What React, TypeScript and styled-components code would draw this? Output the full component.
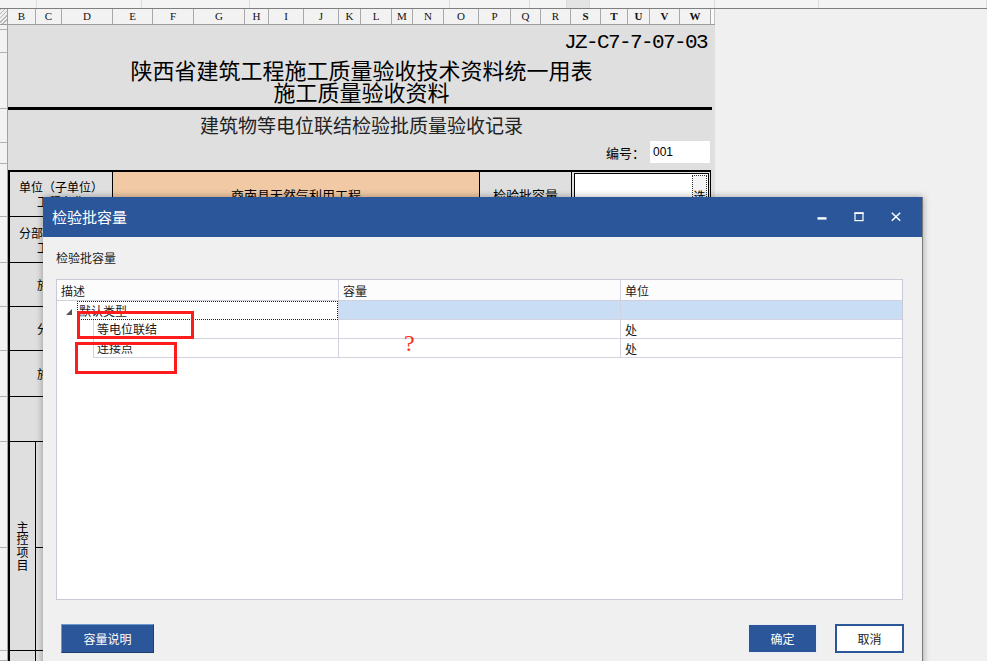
import React from "react";
import styled, { createGlobalStyle } from "styled-components";

const CJK = `"Noto Sans CJK SC", "Noto Sans", sans-serif`;

const GlobalStyle = createGlobalStyle`
  html, body { margin: 0; padding: 0; overflow: hidden; }
  body { font-family: ${CJK}; background: #f0f0f0; }
  * { box-sizing: border-box; }
`;

const Page = styled.div`
  position: relative;
  width: 987px;
  height: 661px;
  overflow: hidden;
  background: #f0f0f0;
  display: flex;
  flex-direction: column;
`;

const TopStrip = styled.div`
  height: 9px;
  flex: none;
  display: flex;
  background: #f4f4f4;
  border-bottom: 1px solid #7f7f7f;
`;

const StripSeg = styled.div<{ $w?: number; $dark?: boolean }>`
  ${(p) => (p.$w ? `width:${p.$w}px; flex:none;` : "flex:1;")}
  border-right: 1px solid #dcdcdc;
  background: ${(p) => (p.$dark ? "#e4e4e4" : "transparent")};
`;

const Main = styled.div`
  flex: 1;
  min-height: 0;
  display: flex;
`;

const RowHeaderCol = styled.div`
  width: 8px;
  flex: none;
  display: flex;
  flex-direction: column;
  background: #f2f2f2;
  border-right: 1px solid #a0a0a0;
`;

const RowCorner = styled.div`
  height: 16px;
  flex: none;
  border-bottom: 1px solid #9c9c9c;
  background: repeating-linear-gradient(135deg, #b8b8b8 0 1px, #efefef 1px 3px);
`;

const RowHead = styled.div<{ $h?: number }>`
  ${(p) => (p.$h ? `height:${p.$h}px; flex:none;` : "flex:1;")}
  border-bottom: 1px solid #b0b0b0;
`;

const SheetCol = styled.div`
  width: 707px;
  flex: none;
  display: flex;
  flex-direction: column;
`;

const ColHeaderRow = styled.div`
  display: flex;
  height: 16px;
  flex: none;
  border-bottom: 1px solid #9c9c9c;
  background: #f2f2f2;
`;

const ColHead = styled.div<{ $w: number; $sel?: boolean }>`
  width: ${(p) => p.$w}px;
  flex: none;
  border-right: 1px solid #a8a8a8;
  display: flex;
  align-items: center;
  justify-content: center;
  font-family: "Liberation Serif", serif;
  font-size: 11px;
  font-weight: ${(p) => (p.$sel ? 700 : 400)};
  color: #111;
  line-height: 1;
`;

const ColFiller = styled.div`
  flex: 1;
  background: #fbfbfb;
  border-right: 1px solid #c4c4c4;
`;

const RightPane = styled.div`
  flex: 1;
  background: #f0f0f0;
`;

const Sheet = styled.div`
  flex: 1;
  background: #dfdfdf;
  display: flex;
  flex-direction: column;
  overflow: hidden;
  & > * {
    flex-shrink: 0;
  }
`;

const CodeLine = styled.div`
  padding: 6px 8px 0 0;
  text-align: right;
  font-family: "Liberation Mono", monospace;
  font-size: 21px;
  letter-spacing: -1.6px;
  line-height: 24px;
  color: #000;
`;

const Title = styled.h1`
  margin: 3px 0 0;
  font-family: ${CJK};
  font-weight: 400;
  font-size: 22px;
  line-height: 22px;
  text-align: center;
  color: #000;
`;

const Rule = styled.div`
  margin: 5px 3px 0 -1px;
  height: 3px;
  background: #000;
`;

const Subtitle = styled.h2`
  margin: 4px 0 0;
  font-weight: 400;
  font-size: 19px;
  line-height: 22px;
  text-align: center;
  color: #222;
`;

const NumberRow = styled.div`
  margin-top: 5px;
  height: 22px;
  display: flex;
  justify-content: flex-end;
  align-items: center;
  gap: 5px;
  padding-right: 5px;
  font-size: 13px;
  color: #000;
`;

const NumberBox = styled.div`
  width: 60px;
  height: 22px;
  background: #fff;
  padding-left: 3px;
  font-family: "Liberation Sans", sans-serif;
  font-size: 12px;
  line-height: 22px;
`;

const FormGrid = styled.div`
  margin-top: 7px;
  width: 703px;
  display: grid;
  grid-template-columns: 26px 8px 69px 367px 92px 139px;
  grid-template-rows: 45px 46px 44px 44px 46px 45px 106px 103px 40px;
  border-top: 2px solid #000;
  border-left: 2px solid #000;
`;

const Cell = styled.div<{ $span?: number; $rows?: number; $bg?: string }>`
  grid-column: span ${(p) => p.$span ?? 1};
  grid-row: span ${(p) => p.$rows ?? 1};
  border-right: 1px solid #000;
  border-bottom: 1px solid #000;
  display: flex;
  align-items: center;
  justify-content: center;
  text-align: center;
  font-size: 12px;
  line-height: 15px;
  color: #000;
  background: ${(p) => p.$bg ?? "transparent"};
`;

const ValueText = styled.span`
  font-size: 13px;
`;

const VerticalText = styled.span`
  width: 12px;
  font-size: 12px;
  line-height: 12.7px;
  word-break: break-all;
`;

const InputCell = styled.div`
  border-right: 1px solid #000;
  border-bottom: 1px solid #000;
  padding: 1px 1px 0 2px;
  display: flex;
`;

const InputBox = styled.div`
  flex: 1;
  background: #fff;
  border: 1px solid #000;
  display: flex;
  justify-content: flex-end;
  padding: 1px 1px 0 0;
`;

const PickButton = styled.div`
  width: 15px;
  background: #f4f4f4;
  border: 1px dotted #333;
  font-size: 12px;
  line-height: 40px;
  text-align: center;
`;

/* Dialog */
const Dialog = styled.section`
  position: absolute;
  left: 43px;
  top: 197px;
  width: 880px;
  height: 480px;
  background: #f0f0f0;
  border-right: 1px solid #7a7a7a;
  box-shadow: 0 0 7px rgba(0, 0, 0, 0.35);
  display: flex;
  flex-direction: column;
`;

const TitleBar = styled.header`
  height: 40px;
  flex: none;
  background: #2b579a;
  display: flex;
  align-items: center;
  padding: 0 8px 0 9px;
  color: #fff;
`;

const TitleText = styled.div`
  flex: 1;
  font-size: 15px;
  line-height: 20px;
`;

const Controls = styled.div`
  display: flex;
`;

const CtrlBtn = styled.div`
  width: 37px;
  height: 40px;
  display: flex;
  align-items: center;
  justify-content: center;
`;

const Body = styled.div`
  padding: 12px 19px 0 13px;
  display: flex;
  flex-direction: column;
`;

const BodyLabel = styled.div`
  font-size: 12px;
  line-height: 17px;
  color: #222;
`;

const TreeGrid = styled.div`
  margin-top: 13px;
  height: 321px;
  background: #fff;
  border: 1px solid #c9c9d8;
  display: flex;
  flex-direction: column;
`;

const GridRow = styled.div<{ $head?: boolean }>`
  display: grid;
  grid-template-columns: 282px 282px 1fr;
  height: ${(p) => (p.$head ? 21 : 19)}px;
  flex: none;
  background: ${(p) => (p.$head ? "#fcfcfc" : "#fff")};
  ${(p) => (p.$head ? "border-bottom: 1px solid #cfcfdd;" : "")}
`;

const GCell = styled.div<{ $last?: boolean; $sel?: boolean; $noBottom?: boolean; $head?: boolean }>`
  display: flex;
  align-items: center;
  padding-left: 4px;
  font-size: 12px;
  line-height: 17px;
  color: #1a1a1a;
  background: ${(p) => (p.$sel ? "#c9ddf4" : "transparent")};
  border-right: ${(p) => (p.$last ? "none" : "1px solid #d2d2e0")};
  border-bottom: ${(p) => (p.$noBottom || p.$head ? "none" : "1px solid #d2d2e0")};
`;

const TreeCell = styled.div<{ $indent: number }>`
  display: flex;
  align-items: stretch;
  padding-left: ${(p) => p.$indent}px;
  border-right: 1px solid #d2d2e0;
`;

const Expander = styled.svg`
  align-self: center;
  margin: 3px 5px 0 0;
  flex: none;
`;

const FocusBox = styled.div`
  flex: 1;
  border: 1px dotted #222;
  padding-left: 1px;
  font-size: 12px;
  line-height: 17px;
  color: #1a1a1a;
`;

const ChildBox = styled.div`
  flex: 1;
  border-left: 1px solid #d2d2e0;
  border-bottom: 1px solid #d2d2e0;
  padding-left: 3px;
  font-size: 12px;
  line-height: 18px;
  color: #1a1a1a;
`;

const Footer = styled.div`
  margin: 24px -1px 0 5px;
  display: flex;
  justify-content: space-between;
`;

const ButtonGroup = styled.div`
  display: flex;
  gap: 18px;
`;

const Btn = styled.div<{ $kind: "info" | "primary" | "plain"; $w: number }>`
  width: ${(p) => p.$w}px;
  height: 29px;
  display: flex;
  align-items: center;
  justify-content: center;
  font-size: 12px;
  color: ${(p) => (p.$kind === "plain" ? "#1a1a1a" : "#fff")};
  background: ${(p) => (p.$kind === "plain" ? "#fff" : "#2b579a")};
  ${(p) =>
    p.$kind === "info"
      ? "border: 1px solid; border-color: #6f96cf #1d3e70 #1d3e70 #6f96cf;"
      : p.$kind === "primary"
      ? "border: 1px solid #e8eef7;"
      : "border: 2px solid #2b579a;"}
`;

const RedBox = styled.div`
  position: absolute;
  border: 3px solid #ff1c1c;
  pointer-events: none;
`;

const RedMark = styled.span`
  position: absolute;
  left: 404px;
  top: 331px;
  font-family: "Liberation Serif", serif;
  font-size: 24px;
  line-height: 24px;
  color: #f5331c;
`;

const columns: [string, number, boolean?][] = [
  ["B", 28], ["C", 26], ["D", 51], ["E", 40], ["F", 41], ["G", 51], ["H", 24],
  ["I", 35], ["J", 35], ["K", 22], ["L", 31], ["M", 21], ["N", 31], ["O", 35],
  ["P", 32], ["Q", 30], ["R", 30], ["S", 30, true], ["T", 27, true],
  ["U", 22, true], ["V", 30, true], ["W", 31, true],
];

const rowHeights = [5, 23, 56, 34, 21, 53, 46, 44, 44, 46, 45, 106, 103];
const strip = [37, 105, 108, 200, 80, 37, 23, 125, 104];

const children = [
  { name: "等电位联结", unit: "处" },
  { name: "连接点", unit: "处" },
];

export default function App() {
  return (
    <>
      <GlobalStyle />
      <Page>
        <TopStrip>
          {strip.map((w, i) => (
            <StripSeg key={i} $w={w} $dark={i === 6} />
          ))}
          <StripSeg />
        </TopStrip>
        <Main>
          <RowHeaderCol>
            <RowCorner />
            {rowHeights.map((h, i) => (
              <RowHead key={i} $h={h} />
            ))}
            <RowHead />
          </RowHeaderCol>
          <SheetCol>
            <ColHeaderRow>
              {columns.map(([l, w, s]) => (
                <ColHead key={l} $w={w} $sel={s}>
                  {l}
                </ColHead>
              ))}
              <ColFiller />
            </ColHeaderRow>
            <Sheet>
              <CodeLine>JZ-C7-7-07-03</CodeLine>
              <Title>
                陕西省建筑工程施工质量验收技术资料统一用表
                <br />
                施工质量验收资料
              </Title>
              <Rule />
              <Subtitle>建筑物等电位联结检验批质量验收记录</Subtitle>
              <NumberRow>
                <span>编号：</span>
                <NumberBox>001</NumberBox>
              </NumberRow>
              <FormGrid>
                <Cell $span={3}>
                  单位（子单位）
                  <br />
                  工程名称
                </Cell>
                <Cell $bg="#f1c9a5">
                  <ValueText>商南县天然气利用工程</ValueText>
                </Cell>
                <Cell>
                  <ValueText>检验批容量</ValueText>
                </Cell>
                <InputCell>
                  <InputBox>
                    <PickButton>选</PickButton>
                  </InputBox>
                </InputCell>

                <Cell $span={3}>
                  分部（子分部）
                  <br />
                  工程名称
                </Cell>
                <Cell $span={3} />
                <Cell $span={3}>施工单位</Cell>
                <Cell $span={3} />
                <Cell $span={3}>分包单位</Cell>
                <Cell $span={3} />
                <Cell $span={3}>施工依据</Cell>
                <Cell $span={3} />
                <Cell $span={3} />
                <Cell $span={3} />

                <Cell $rows={2}>
                  <VerticalText>主控项目</VerticalText>
                </Cell>
                <Cell />
                <Cell $span={4} />
                <Cell />
                <Cell $span={4} />
                <Cell />
                <Cell />
                <Cell $span={4} />
              </FormGrid>
            </Sheet>
          </SheetCol>
          <RightPane />
        </Main>

        <Dialog>
          <TitleBar>
            <TitleText>检验批容量</TitleText>
            <Controls>
              <CtrlBtn>
                <svg width="10" height="10" viewBox="0 0 10 10">
                  <rect x="0.5" y="5.2" width="9" height="2.4" fill="#fff" />
                </svg>
              </CtrlBtn>
              <CtrlBtn>
                <svg width="10" height="10" viewBox="0 0 10 10">
                  <rect x="1" y="1" width="8" height="7.6" fill="none" stroke="#fff" strokeWidth="1.2" />
                  <rect x="0.4" y="0.4" width="9.2" height="1.6" fill="#fff" />
                </svg>
              </CtrlBtn>
              <CtrlBtn>
                <svg width="10" height="10" viewBox="0 0 10 10">
                  <path d="M0.8 0.8 L9.2 8.8 M9.2 0.8 L0.8 8.8" stroke="#fff" strokeWidth="1.5" fill="none" />
                </svg>
              </CtrlBtn>
            </Controls>
          </TitleBar>
          <Body>
            <BodyLabel>检验批容量</BodyLabel>
            <TreeGrid>
              <GridRow $head>
                <GCell $head>描述</GCell>
                <GCell $head>容量</GCell>
                <GCell $head $last>
                  单位
                </GCell>
              </GridRow>
              <GridRow>
                <TreeCell $indent={9}>
                  <Expander width="6" height="6" viewBox="0 0 6 6">
                    <polygon points="6,0 6,6 0,6" fill="#555" />
                  </Expander>
                  <FocusBox>默认类型</FocusBox>
                </TreeCell>
                <GCell $sel />
                <GCell $sel $last />
              </GridRow>
              {children.map((c) => (
                <GridRow key={c.name}>
                  <TreeCell $indent={36}>
                    <ChildBox>{c.name}</ChildBox>
                  </TreeCell>
                  <GCell />
                  <GCell $last>{c.unit}</GCell>
                </GridRow>
              ))}
            </TreeGrid>
            <Footer>
              <Btn $kind="info" $w={93}>
                容量说明
              </Btn>
              <ButtonGroup>
                <Btn $kind="primary" $w={69}>
                  确定
                </Btn>
                <Btn $kind="plain" $w={69}>
                  取消
                </Btn>
              </ButtonGroup>
            </Footer>
          </Body>
        </Dialog>

        <RedBox style={{ left: 77, top: 311, width: 117, height: 28 }} />
        <RedBox style={{ left: 75, top: 342, width: 102, height: 32 }} />
        <RedMark>?</RedMark>
      </Page>
    </>
  );
}
